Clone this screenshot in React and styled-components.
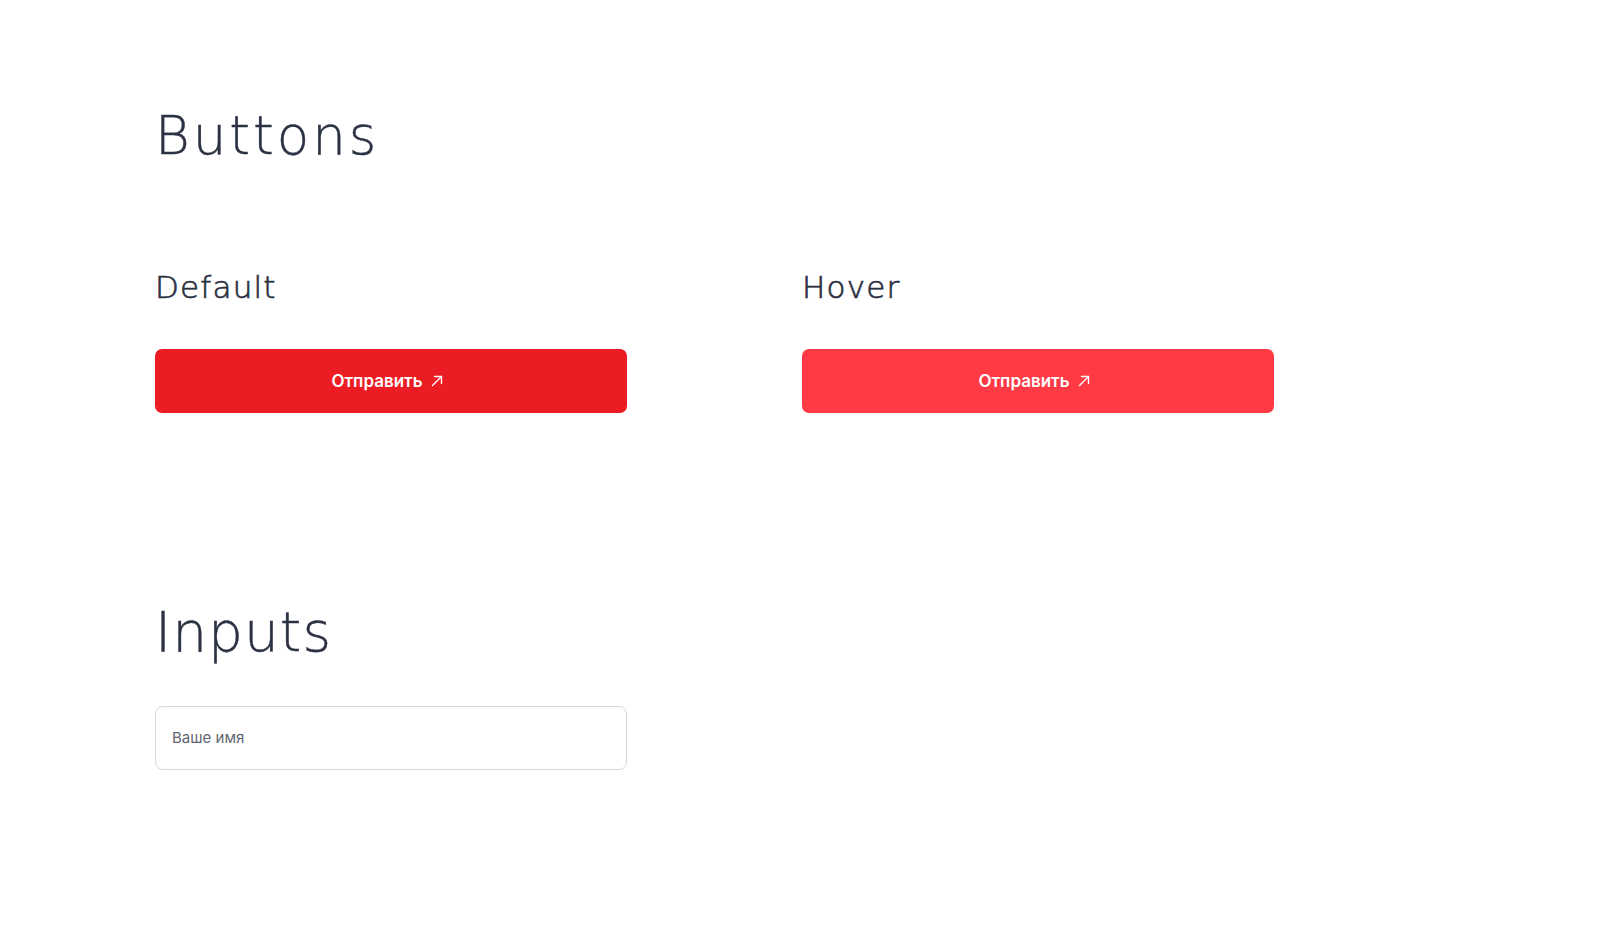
import styled, { createGlobalStyle } from "styled-components";

const GlobalStyle = createGlobalStyle`
  * { box-sizing: border-box; }
  body {
    margin: 0;
    background: #ffffff;
    font-family: "Inter", "Noto Sans", sans-serif;
  }
`;

const Page = styled.main`
  padding: 104px 155px 120px;
`;

const Section = styled.section`
  display: flex;
  flex-direction: column;

  & + & {
    margin-top: 186px;
  }
`;

const Title = styled.h1`
  margin: 0;
  font-family: "DejaVu Sans", sans-serif;
  font-weight: 200;
  font-size: ${(p) => p.size || 53}px;
  line-height: 1.2;
  color: #2b3142;
  letter-spacing: ${(p) => p.spacing || 0.5}px;
  -webkit-text-stroke: 0.4px #2b3142;
`;

const Grid = styled.div`
  display: grid;
  grid-template-columns: 472px 472px;
  column-gap: 175px;
  margin-top: 101px;
`;

const Column = styled.div`
  display: flex;
  flex-direction: column;
  gap: 43px;
`;

const SubTitle = styled.h2`
  margin: 0;
  font-family: "DejaVu Sans", sans-serif;
  font-weight: 200;
  font-size: 31px;
  line-height: 1.2;
  color: #2b3142;
  letter-spacing: 1.2px;
  -webkit-text-stroke: 0.7px #2b3142;
`;

const Button = styled.button`
  display: flex;
  align-items: center;
  justify-content: center;
  gap: 8px;
  width: 472px;
  height: 64px;
  border: none;
  border-radius: 7px;
  background: ${(p) => (p.hover ? "#ff3a45" : "#ec1c24")};
  color: #ffffff;
  font-family: "Inter", sans-serif;
  font-weight: 600;
  font-size: 17px;
  cursor: pointer;
  padding: 0 8px 0 0;
`;

const Field = styled.input`
  margin-top: 41px;
  width: 472px;
  height: 64px;
  border: 1px solid #d6d8dc;
  border-radius: 8px;
  padding: 0 16px;
  font-family: "Inter", sans-serif;
  font-size: 15px;
  color: #2b3142;
  outline: none;

  &::placeholder {
    color: #5f6673;
  }
`;

const Arrow = () => (
  <svg width="12" height="12" viewBox="0 0 12 12" fill="none" stroke="#fff" strokeWidth="1.4" strokeLinecap="round" strokeLinejoin="round">
    <path d="M1.5 10.5 L10.5 1.5" />
    <path d="M3.5 1.5 H10.5 V8.5" />
  </svg>
);

const App = () => {
  return (
    <Page>
      <GlobalStyle />
      <Section>
        <Title spacing={3}>Buttons</Title>
        <Grid>
          <Column>
            <SubTitle>Default</SubTitle>
            <Button>
              Отправить <Arrow />
            </Button>
          </Column>
          <Column>
            <SubTitle>Hover</SubTitle>
            <Button hover>
              Отправить <Arrow />
            </Button>
          </Column>
        </Grid>
      </Section>
      <Section>
        <Title size={55} spacing={1}>Inputs</Title>
        <Field placeholder="Ваше имя" />
      </Section>
    </Page>
  );
};

export default App;
